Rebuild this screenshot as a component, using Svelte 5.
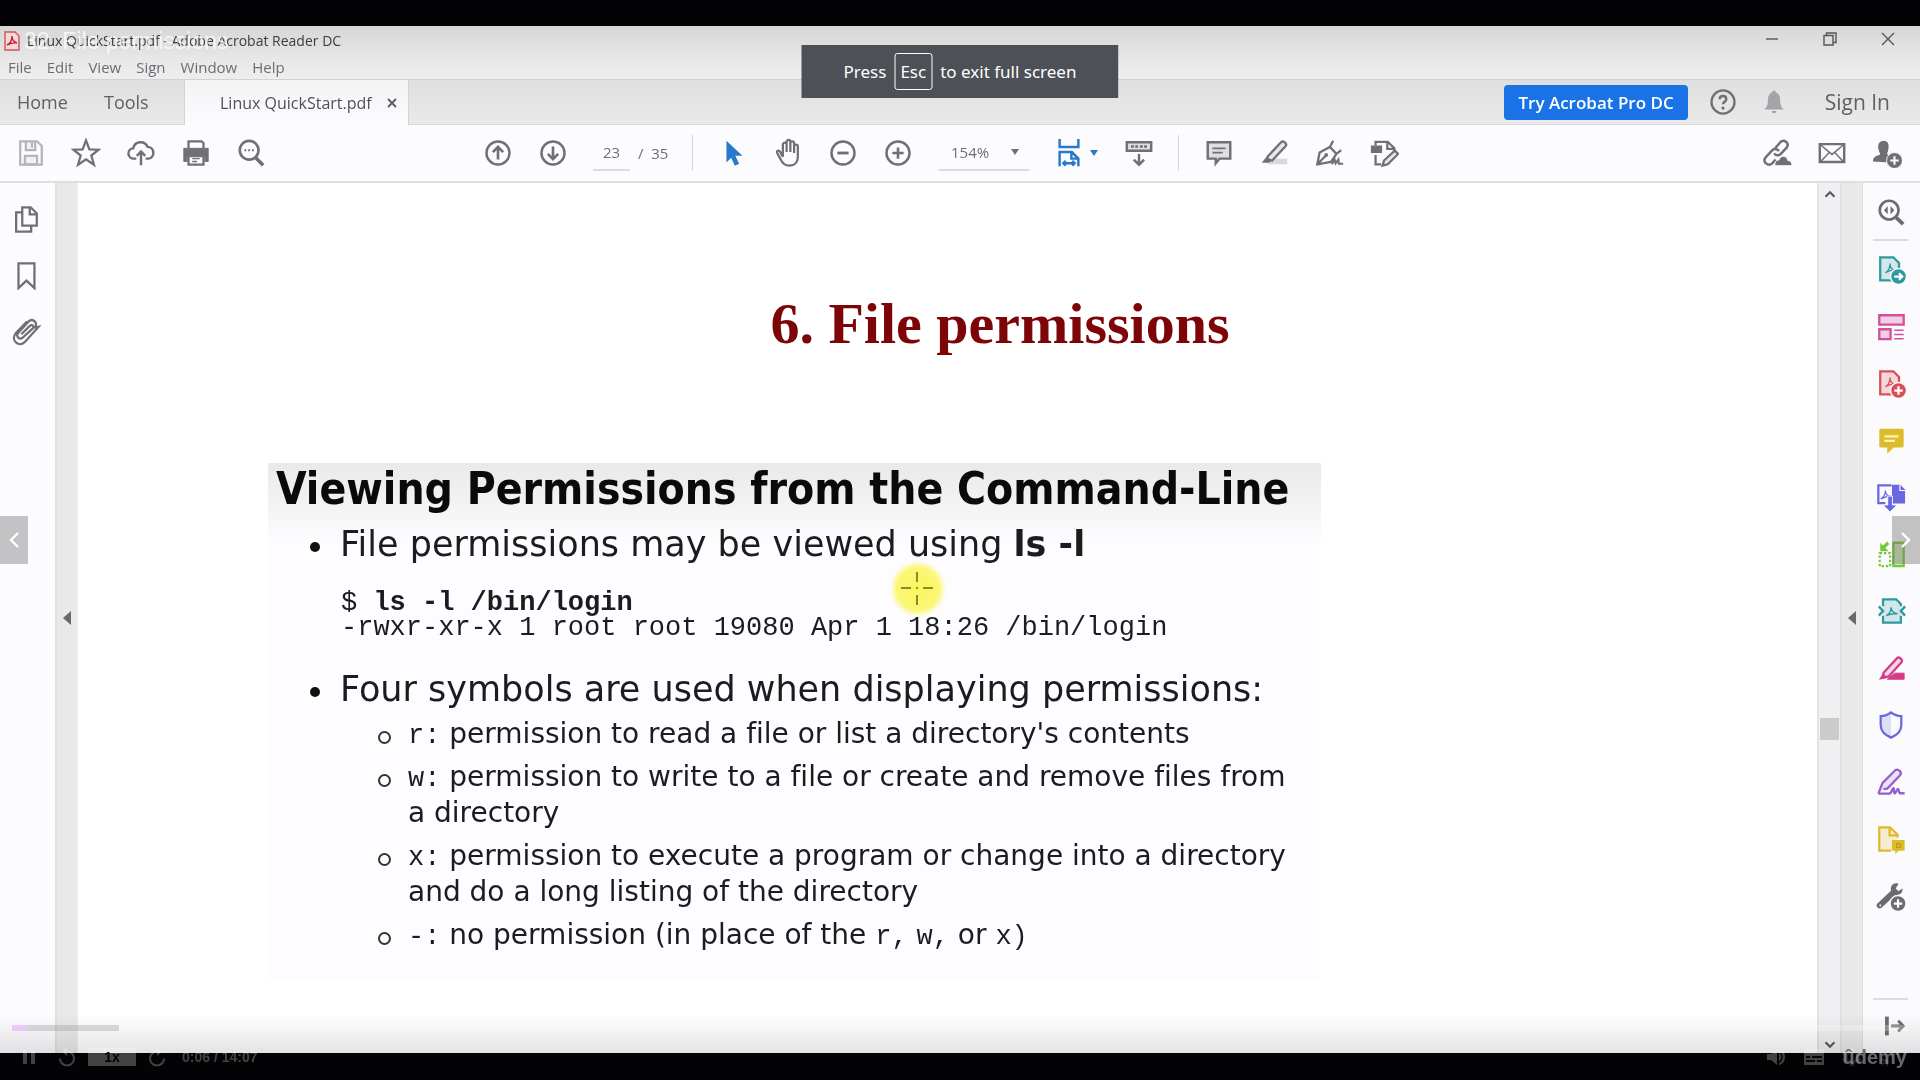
<script>
  let page = $state('23');
  let zoom = $state('154%');

  const menus = ['File', 'Edit', 'View', 'Sign', 'Window', 'Help'];

  const pdfMark = '<path d="M10 20c3-2 5-6 5-10 0 4 2 7 6 7-4 0-8 1-11 3z" stroke-width="1.4"/>';

  // Icon bodies on a 32 by 32 grid, drawn with the current colour.
  const icons = {
    save: '<g opacity=".5"><path d="M4.500 3.500h18l5 5v20h-23z" fill="none"/><path d="M10.500 4v9h10V4M17 4v6M9.500 28v-9h13v9z" fill="currentColor" fill-opacity=".15"/></g>',
    star: '<path d="M16 2.500l3.600 9.700 9.900.3-7.800 6.200 2.800 9.800-8.500-5.800-8.500 5.800 2.800-9.800-7.800-6.200 9.900-.3z"/>',
    cloud: '<path d="M11 22H8.500a5.500 5.500 0 0 1-.8-11A8 8 0 0 1 23 9.500a6.300 6.300 0 0 1 1 12.500h-3M16 29V14.500M11.500 19l4.500-4.700 4.500 4.700" stroke-width="2.600"/>',
    print: '<path d="M8 11V3.500h14l2 2V11" /><path d="M3 11h26v14h-3.500v-5h-19v5H3z" fill="currentColor" stroke-width="1"/><path d="M8 19h16v9.500H8z"/><path d="M12 22h8M12 25h5" stroke-width="1.500"/>',
    find: '<circle cx="14" cy="13" r="10" stroke-width="2.800"/><path d="M21 21l8 8" stroke-width="3.800"/><path d="M9 13h2m2 0h2m2 0h2" stroke-width="2"/>',
    up: '<circle cx="16" cy="16" r="12.300" stroke-width="2.600"/><path d="M16 23V10M10.500 15L16 9.500l5.500 5.500" stroke-width="2.800"/>',
    down: '<circle cx="16" cy="16" r="12.300" stroke-width="2.600"/><path d="M16 9v13M10.500 17l5.500 5.500 5.500-5.500" stroke-width="2.800"/>',
    arrow: '<path d="M9 3v23l5-5 4 8.500 4.500-2-4-8.500H26z" fill="currentColor" stroke="none"/>',
    hand: '<path d="M10.500 20V7a2 2 0 0 1 4 0v8V4a2 2 0 0 1 4 0v11V5.500a2 2 0 0 1 4 0V16 9a2 2 0 0 1 4 0v11c0 6-3.500 9.500-9 9.500-5 0-7.500-2.500-9.500-7L4.500 16c-1-2.500 1.500-3.500 3-1.500z"/>',
    minus: '<circle cx="16" cy="16" r="12.300" stroke-width="2.600"/><path d="M10 16h12" stroke-width="3"/>',
    plus: '<circle cx="16" cy="16" r="12.300" stroke-width="2.600"/><path d="M10 16h12M16 10v12" stroke-width="2.800"/>',
    fit: '<path d="M6 1v8.500h20V1M6 30V15h13l7 7v8M18.500 15v7H26M10 27h12M12.500 24.500L10 27l2.500 2.500M19.500 24.500L22 27l-2.500 2.500" stroke-width="2.600"/>',
    scroll: '<path d="M3 4.500h26v9H3z" fill="currentColor" fill-opacity=".2" stroke-width="2.600"/><path d="M7.500 9h3m1.500 0h3m2 0h3m1.500 0h3M16 17v11M10.500 23l5.500 5.500 5.500-5.500" stroke-width="2.600"/>',
    comment: '<path d="M4 4.500h24v17.500H16.500L12.500 27v-5H4z" fill="currentColor" fill-opacity=".2" stroke-width="2.600"/><path d="M9 11h14M9 15.500h11" stroke-width="1.800"/>',
    marker: '<path d="M14 22h16v6H9z" fill="currentColor" fill-opacity=".25" stroke="none"/><path d="M9 20L23.500 4.500c2-2 7 1 5 4L14 24l-6-1z" fill="currentColor" fill-opacity=".15"/><path d="M9 20l5 4-3.500 2.500H3l3-4z" fill="currentColor" stroke="none"/>',
    pen: '<path d="M3.500 28L6 15.500l11-6 7 7.500-6 8.500zM3.500 28l9-9M17 9.500L20.500 3M24 17l5-4"/><circle cx="13" cy="18" r="2" fill="currentColor" stroke="none"/><path d="M19 28l3-5 1 4 3-4 .5 4.500H31" stroke-width="2.200"/>',
    edit: '<path d="M7 8V4h13l7 7v3M19.500 4v7.500H26M7 18v10h6" /><path d="M2 8h12v8H2z" fill="currentColor" stroke="none"/><path d="M14.500 29.500l1.500-5.500 11.500-10.500 3.500 3.500-11 11z" fill="currentColor" fill-opacity=".15"/>',
    link: '<path d="M14 11l5.500-6.500c4-4 10 1 7 5.500L20 17c-2 2-5.500 2-7-.5M18 14c-2-3.500-6-2.500-7.500-.5L4 20.500c-4 5 2.500 10.500 7 6.500l3.500-4" stroke-width="2.600"/><path d="M14 29.500c-1-4.500 1.500-6 4-6 2-6 9-4.500 9.500.5 3.500 0 5 3.500 4 5.500z" fill="currentColor" stroke="#fcfbfe" stroke-width="1"/>',
    mail: '<path d="M3 6.500h26v19H3z" stroke-width="2.600"/><path d="M4 7.500l12 10 12-10M4 25l9-9.500M28 25l-9-9.500" stroke-width="1.600"/>',
    person: '<path d="M1 25c0-5 3-6 7-7 1-1 .5-2-.5-4C5 7 8 3 12.500 3S19 7 17 14c-1 2-1 3 0 4l6 3-5 5z" fill="currentColor" stroke="none"/><circle cx="24" cy="24" r="8.500" fill="currentColor" stroke="#fcfbfe" stroke-width="1"/><path d="M19.500 24h9M24 19.500v9" stroke="#fcfbfe" stroke-width="2.200"/>',
    help: '<circle cx="16" cy="16" r="12.300"/><path d="M12.500 13c0-4.500 7-4.500 7 0 0 2.500-3.500 3-3.500 5.500" stroke-width="2.600"/><circle cx="16" cy="22.500" r="1.700" fill="currentColor" stroke="none"/>',
    bell: '<path d="M5.500 24c3.500-3 4-6 4-11 0-4 2-6.500 4.500-7.200a2 2 0 0 1 4 0c2.500.7 4.500 3.200 4.500 7.200 0 5 .5 8 4 11zM13.500 25.500h5a2.500 2.500 0 0 1-5 0z" fill="currentColor" stroke="none"/>',
    pages: '<path d="M12 3.500h9l6.500 6.500v13H12zM20 4v7h7M12 9H5.500v20.500h16V23" />',
    bookmark: '<path d="M8 3.500h17V30l-8.500-8L8 30z"/>',
    clip: '<path d="M11 19.500l9-9c3-2.500 5 1 3 3L12.500 23c-3.500 3-8-1.500-4.500-5.500L18.500 6c5-4.500 11 1.500 6.500 7M25.500 12.500l4-1-14.500 16c-6 6.500-16-1-10-9L17 6"/>',
    look: '<circle cx="14" cy="14" r="10" stroke-width="2.800"/><path d="M21.500 22l7.500 7" stroke-width="4"/><path d="M12.500 9.500v9L8.500 14zM15.500 9.500v9l4-4.500z" fill="currentColor" stroke="none"/>',
    exportPdf: `<path d="M4.500 3.500h14l6 6v18.500h-20z" fill="currentColor" fill-opacity=".2"/>${pdfMark}<circle cx="24" cy="24" r="8.500" fill="currentColor" stroke="#fafafc" stroke-width="1.500"/><path d="M19.500 24h8M24.500 20.500L28 24l-3.500 3.500" stroke="#fff"/>`,
    organize: '<path d="M3.500 4.500h26v10h-26zM3.500 19.500h12v10.500h-12z" fill="currentColor" fill-opacity=".25" stroke-width="2.500"/><path d="M19.500 20.500h10M19.500 25h10M19.500 29.500h10" stroke-width="1.600"/>',
    createPdf: `<path d="M4.500 3.500h14l6 6v18.500h-20z" fill="currentColor" fill-opacity=".2"/>${pdfMark}<circle cx="24" cy="24" r="8.500" fill="currentColor" stroke="#fafafc" stroke-width="1.500"/><path d="M19.500 24h9M24 19.500v9" stroke="#fff"/>`,
    note: '<path d="M5 4h23a1.500 1.500 0 0 1 1.500 1.500v17A1.500 1.500 0 0 1 28 24h-9l-7 6.500V24H5a1.500 1.500 0 0 1-1.500-1.500v-17A1.500 1.500 0 0 1 5 4z" fill="currentColor" stroke="none"/><path d="M9 12h15M9 17h11" stroke="#fff3b0"/>',
    combine: '<path d="M17 3h9l5 5v15H17z" fill="currentColor" stroke="none"/><path d="M25.500 3v6H31" stroke="#fff" stroke-width="1.200"/><path d="M10 22.500H2.500v-19h14" /><path d="M5 18c4-2 5-5 5-9 0 4 2 6 6 6-4 0-7 1-11 3z" stroke-width="1.300"/><path d="M12.500 15h5v9.500h5L15 32l-7.500-7.500h5z" fill="currentColor" stroke="#fafafc" stroke-width="1"/>',
    compare: '<path d="M18.500 4h11v25h-11z" fill="currentColor" fill-opacity=".35" stroke-width="2.500"/><path d="M4 15h11v14H4z" stroke-dasharray="2.500 2"/><path d="M13 4L7 10" stroke-width="3.500"/><path d="M4.500 4v9h9z" fill="currentColor" stroke="none"/>',
    compress: '<path d="M7.500 11V3.500h14l5 5V11M7.500 21v7.500h19V21" /><path d="M7.500 3.500h14l5 5v20h-19z" fill="currentColor" fill-opacity=".2" stroke="none"/><path d="M3 11l4.500 5L3 21M31 11l-4.500 5L31 21" stroke-width="2.600"/><path d="M11 21c4-2 5-5 5-9 0 4 3 6 7 7-5-.5-9 .5-12 2z" stroke-width="1.500"/>',
    redact: '<path d="M20 21.500h10V28H12z" fill="currentColor" stroke="currentColor" stroke-width="1"/><path d="M8 21L22.500 5.500c2-2 6 1 5 4L13.500 25l-6 1z" fill="currentColor" fill-opacity=".2" stroke-width="2.400"/><path d="M8 21l3 6-8 1.500z" fill="currentColor" stroke="none"/>',
    shield: '<path d="M16 2.500c3 2.500 7 4 11 4V16c0 6-4 10.500-11 13.500C9 26.500 5 22 5 16V6.500c4 0 8-1.500 11-4z"/><path d="M16 4v24C9.500 25 6 21.500 6 16V7.500c4 0 7-1 10-3.500z" fill="currentColor" fill-opacity=".2" stroke="none"/>',
    sign: '<path d="M2.500 28.500L7 17 20.500 3.500c3-2 8 2 5 5.500L12 23l-4 .500M2.500 28.500H15" fill="currentColor" fill-opacity=".15" stroke-width="2.400"/><path d="M14 28.500c3 0 3-6 4.500-6s0 5.500 1.500 5.500 2-4.500 3.500-4.500 0 4 2 4.500h5" stroke-width="2.500"/>',
    send: '<path d="M16 28.500H3.500v-25H15l8 8v3M14.500 3.500v8.500H23" /><path d="M3.500 3.500H15l8 8v17H3.500z" fill="currentColor" fill-opacity=".2" stroke="none"/><path d="M17 17h13.500v11.500H24L20.500 32v-3.500H17z" fill="currentColor" stroke="none"/><path d="M22 21h4v4h-4z" stroke="#b79a10" stroke-width="1.200"/>',
    tools: '<path d="M4 26L18.500 12.500" stroke-width="6.500" stroke-linecap="round"/><path d="M24 3c-5-2-9 2-8 7l5 5c5 0 8-3 7-7l-4 3-3-3z" fill="currentColor" stroke="none"/><circle cx="4.500" cy="26" r="1" fill="#fff" stroke="none"/><circle cx="23.500" cy="24" r="8.500" fill="currentColor" stroke="#fafafc" stroke-width="1.500"/><path d="M19 24h9M23.500 19.500v9" stroke="#fff"/>',
    collapse: '<path d="M9.500 6v20" stroke-width="4"/><path d="M14 16h13M21.500 10.500L27 16l-5.500 5.500" stroke-width="3"/>'
  };

  const rightTools = [
    ['exportPdf', 'Export PDF', 'teal'],
    ['organize', 'Organize pages', 'pink'],
    ['createPdf', 'Create PDF', 'red'],
    ['note', 'Comment', 'yellow'],
    ['combine', 'Combine files', 'indigo'],
    ['compare', 'Compare files', 'green'],
    ['compress', 'Compress PDF', 'teal'],
    ['redact', 'Redact', 'magenta'],
    ['shield', 'Protect', 'indigo'],
    ['sign', 'Fill and sign', 'purple'],
    ['send', 'Send for comments', 'yellow'],
    ['tools', 'More tools', 'grey']
  ];
</script>

{#snippet icon(name)}
  <svg class="icon" viewBox="0 0 32 32" fill="none" stroke="currentColor" stroke-width="2.4" aria-hidden="true">{@html icons[name]}</svg>
{/snippet}

{#snippet tool(name, label, tone = '')}
  <button class="tool {tone}" aria-label={label}>{@render icon(name)}</button>
{/snippet}

<div class="screen">
  <div class="window">
    <header class="titlebar">
      <svg class="app-icon" viewBox="0 0 16 20" fill="none" stroke="#d0525a" stroke-width="1.400" aria-hidden="true">
        <path d="M1 1h10l4 4v14H1z" fill="#f3d9da" />
        <path d="M3 14c4-2 5-5 5-9 0 4 2 6 5 7-4-.500-7 .500-10 2z" stroke="#c8232c" />
      </svg>
      <span class="app-title">Linux QuickStart.pdf - Adobe Acrobat Reader DC</span>
      <div class="controls">
        <button aria-label="Minimize"><svg viewBox="0 0 14 14"><path d="M1 7h12" /></svg></button>
        <button aria-label="Restore"><svg viewBox="0 0 14 14"><path d="M1 3.500h9V13H1zM3.500 3V1H13v9.500h-2.500" /></svg></button>
        <button aria-label="Close"><svg viewBox="0 0 14 14"><path d="M1 1l12 12M13 1L1 13" /></svg></button>
      </div>
    </header>

    <nav class="menubar" aria-label="Menu">
      {#each menus as m}<button>{m}</button>{/each}
    </nav>

    <div class="tabs">
      <button class="tab home">Home</button>
      <button class="tab tools">Tools</button>
      <div class="tab file">
        <button>Linux QuickStart.pdf</button>
        <button class="close" aria-label="Close tab"><svg viewBox="0 0 10 10"><path d="M1 1l8 8M9 1L1 9" /></svg></button>
      </div>
      <div class="account">
        <button class="try">Try Acrobat Pro DC</button>
        <button class="tool help" aria-label="Help">{@render icon('help')}</button>
        <button class="tool bell" aria-label="Notifications">{@render icon('bell')}</button>
        <button class="signin">Sign In</button>
      </div>
    </div>

    <div class="toolbar">
      <div class="group">
        {@render tool('save', 'Save')}
        {@render tool('star', 'Star')}
        {@render tool('cloud', 'Upload')}
        {@render tool('print', 'Print')}
        {@render tool('find', 'Find')}
      </div>
      <div class="group middle">
        {@render tool('up', 'Previous page')}
        {@render tool('down', 'Next page')}
        <input class="page" aria-label="Page" bind:value={page} />
        <span class="total">/&nbsp; 35</span>
        <span class="rule"></span>
        {@render tool('arrow', 'Select', 'blue')}
        {@render tool('hand', 'Pan')}
        {@render tool('minus', 'Zoom out')}
        {@render tool('plus', 'Zoom in')}
        <div class="zoom">
          <select aria-label="Zoom" bind:value={zoom}>
            <option>100%</option>
            <option>154%</option>
          </select>
          <svg class="caret" viewBox="0 0 8 6"><path d="M0 0h8L4 6z" /></svg>
        </div>
        <button class="tool fit blue" aria-label="Page fit">
          {@render icon('fit')}
          <svg class="caret" viewBox="0 0 8 6"><path d="M0 0h8L4 6z" /></svg>
        </button>
        {@render tool('scroll', 'Scrolling')}
        <span class="rule"></span>
        {@render tool('comment', 'Add comment')}
        {@render tool('marker', 'Highlight')}
        {@render tool('pen', 'Sign document')}
        {@render tool('edit', 'Stamp')}
      </div>
      <div class="group right">
        {@render tool('link', 'Share link')}
        {@render tool('mail', 'Send by email')}
        {@render tool('person', 'Share with others')}
      </div>
    </div>

    <div class="body">
      <aside class="left">
        {@render tool('pages', 'Page thumbnails')}
        {@render tool('bookmark', 'Bookmarks')}
        {@render tool('clip', 'Attachments')}
      </aside>
      <div class="strip first">
        <button aria-label="Show left panel"><svg viewBox="0 0 8 14"><path d="M8 0v14L0 7z" /></svg></button>
      </div>

      <main>
        <h1>6. File permissions</h1>
        <section class="slide">
          <h2>Viewing Permissions from the Command-Line</h2>
          <ul class="points">
            <li><div>File permissions may be viewed using <b>ls -l</b></div></li>
          </ul>
          <pre>$ <b>ls -l /bin/login</b>
-rwxr-xr-x 1 root root 19080 Apr 1 18:26 /bin/login</pre>
          <ul class="points">
            <li><div>Four symbols are used when displaying permissions:</div></li>
          </ul>
          <ul class="symbols">
            <li><div><code>r:</code> permission to read a file or list a directory's contents</div></li>
            <li><div><code>w:</code> permission to write to a file or create and remove files from<br />a directory</div></li>
            <li><div><code>x:</code> permission to execute a program or change into a directory<br />and do a long listing of the directory</div></li>
            <li><div><code>-:</code> no permission (in place of the <code>r,</code> <code>w,</code> or <code>x)</code></div></li>
          </ul>
          <svg class="pointer" viewBox="0 0 60 60" aria-hidden="true">
            <defs>
              <radialGradient id="glow">
                <stop offset="0" stop-color="#fdf95c" />
                <stop offset=".75" stop-color="#fdfa78" />
                <stop offset="1" stop-color="#fefcb8" stop-opacity="0" />
              </radialGradient>
            </defs>
            <circle cx="30" cy="30" r="29" fill="url(#glow)" />
            <path d="M29 13v10M29 36v10M13 29h10M35 29h10M28 29h2" stroke="#8d8a2c" stroke-width="2" />
          </svg>
        </section>
      </main>

      <div class="scrollbar">
        <svg viewBox="0 0 10 8"><path d="M1 6l4-4 4 4" /></svg>
        <span class="thumb"></span>
        <svg viewBox="0 0 10 8"><path d="M1 2l4 4 4-4" /></svg>
      </div>
      <div class="strip">
        <button aria-label="Hide right panel"><svg viewBox="0 0 8 14"><path d="M8 0v14L0 7z" /></svg></button>
      </div>
      <aside class="side">
        {@render tool('look', 'Find a tool')}
        <hr />
        {#each rightTools as [name, label, tone]}
          {@render tool(name, label, tone)}
        {/each}
        <div class="foot">
          <hr />
          {@render tool('collapse', 'Collapse panel')}
        </div>
      </aside>
    </div>
  </div>

  <div class="video-title">32. File permissions</div>
  <div class="toast">Press <kbd>Esc</kbd> to exit full screen</div>
  <button class="nav prev" aria-label="Previous lecture"><svg viewBox="0 0 10 16"><path d="M9 1L2 8l7 7" /></svg></button>
  <button class="nav next" aria-label="Next lecture"><svg viewBox="0 0 10 16"><path d="M1 1l7 7-7 7" /></svg></button>

  <div class="brand">ûdemy</div>
  <footer class="player">
    <div class="progress"><span class="buffered"></span><span class="played"></span></div>
    <div class="buttons">
      <button class="ctl pause" aria-label="Pause"><svg viewBox="0 0 20 20"><path d="M4 3h4v14H4zM12 3h4v14h-4z" /></svg></button>
      <button class="ctl" aria-label="Rewind"><svg viewBox="0 0 20 20"><path d="M10 0v3.500a8 8 0 1 1-8 8h2a6 6 0 1 0 6-6V9L5 4.500z" /></svg></button>
      <button class="rate">1x</button>
      <button class="ctl" aria-label="Forward"><svg viewBox="0 0 20 20"><path d="M10 0v3.500a8 8 0 1 0 8 8h-2a6 6 0 1 1-6-6V9l5-4.500z" /></svg></button>
      <span class="time">0:06 / 14:07</span>
      <div class="end">
        <button class="ctl" aria-label="Volume"><svg viewBox="0 0 20 20"><path d="M1 7h4l6-5v16l-6-5H1zM13 6c3 1.500 3 6.500 0 8zM13 2c8 2 8 14 0 16v-2c5-2 5-10 0-12z" /></svg></button>
        <button class="ctl" aria-label="Captions"><svg viewBox="0 0 20 20"><path fill-rule="evenodd" d="M1 2h18a1 1 0 0 1 1 1v14a1 1 0 0 1-1 1H1a1 1 0 0 1-1-1V3a1 1 0 0 1 1-1zM2 9v2h4V9zM8 9v2h10V9zM2 13v2h9v-2zM13 13v2h5v-2z" /></svg></button>
        <button class="ctl faint" aria-label="Settings"><svg viewBox="0 0 20 20"><path fill-rule="evenodd" d="M8 1h4l.500 3 2.500 1 3-1 2 3.500L17.500 10l2 2.500-2 3.500-3-1-2 1-.500 3H8l-.500-3-2.500-1-3 1-2-3.500L2.500 10 0 7.500 2 4l3 1 2.500-1zM10 6a4 4 0 1 0 0 8 4 4 0 0 0 0-8z" /></svg></button>
        <button class="ctl faint" aria-label="Exit full screen"><svg viewBox="0 0 20 20"><path d="M12 8V1h2v3.500L18 1l1 1-4 4h4v2zM8 12v7H6v-3.500L2 19l-1-1 4-4H1v-2z" /></svg></button>
      </div>
    </div>
  </footer>
</div>

<style>
  :global(body) {
    margin: 0;
    background: #030306;
  }
  * {
    box-sizing: border-box;
  }
  button,
  input,
  select {
    font: inherit;
    color: inherit;
    background: none;
    border: 0;
    padding: 0;
    margin: 0;
  }
  h1,
  h2,
  ul,
  pre {
    margin: 0;
    padding: 0;
  }
  .screen {
    position: relative;
    display: flex;
    flex-direction: column;
    min-height: 100vh;
    padding: 26px 0 27px;
    background: #030306;
    font-family: "Open Sans", "Noto Sans", sans-serif;
    color: #606066;
    overflow: hidden;
  }
  .window {
    flex: 1;
    display: flex;
    flex-direction: column;
    background: #fcfbfe;
  }

  .titlebar {
    display: flex;
    align-items: center;
    height: 29px;
    padding: 0 3px 0 4px;
    background: linear-gradient(#d6d6d6, #e4e5e5);
    font-size: 14px;
    color: #3c3c42;
  }
  .app-icon {
    width: 16px;
    height: 20px;
    margin-right: 7px;
  }
  .controls {
    display: flex;
    margin-left: auto;
  }
  .controls button {
    width: 58px;
    height: 28px;
  }
  .controls svg {
    width: 14px;
    height: 14px;
    fill: none;
    stroke: #55555a;
    stroke-width: 1.4;
  }
  .menubar {
    display: flex;
    align-items: center;
    gap: 15px;
    height: 25px;
    padding: 0 8px;
    background: linear-gradient(#e6e6e6, #eeeeef);
    border-bottom: 1px solid #d2d2d4;
    font-size: 15px;
    line-height: 20px;
    color: #6c6c74;
  }

  .tabs {
    display: flex;
    height: 45px;
    background: linear-gradient(#dfdfdf, #eaeaea);
    font-size: 18px;
  }
  .tab {
    line-height: 44px;
    border-bottom: 1px solid #d9d9da;
  }
  .home {
    width: 88px;
    padding-left: 17px;
    text-align: left;
  }
  .tools {
    width: 96px;
    padding-left: 16px;
    text-align: left;
  }
  .file {
    display: flex;
    align-items: center;
    justify-content: space-between;
    width: 225px;
    padding: 0 11px 0 35px;
    background: linear-gradient(#f3f3f4, #fcfbfe);
    border-left: 1px solid #d4d4d6;
    border-right: 1px solid #d4d4d6;
    border-bottom: 0;
    font-size: 16px;
    color: #505058;
  }
  .close svg {
    display: block;
    width: 10px;
    height: 10px;
    stroke: #5a5a60;
    stroke-width: 1.8;
  }
  .account {
    flex: 1;
    display: flex;
    align-items: center;
    justify-content: flex-end;
    padding-right: 30px;
    border-bottom: 1px solid #d9d9da;
  }
  .try {
    height: 35px;
    padding: 0 14px;
    margin-right: 10px;
    border-radius: 4px;
    background: #1a73e6;
    color: #fff;
    font-size: 17px;
    font-weight: 600;
  }
  .account .tool {
    width: 51px;
    height: 44px;
  }
  .help {
    color: #707074;
  }
  .bell {
    color: #a4a4a8;
  }
  .signin {
    margin-left: 25px;
    font-size: 21px;
  }

  .toolbar {
    display: flex;
    align-items: center;
    height: 58px;
    padding: 0 6px 0 3px;
    border-bottom: 2px solid #dfdfe2;
    font-size: 15px;
    color: #707074;
  }
  .group {
    display: flex;
    align-items: center;
  }
  .middle {
    margin-left: 192px;
  }
  .right {
    margin-left: auto;
  }
  .tool {
    display: flex;
    flex: none;
    align-items: center;
    justify-content: center;
    width: 55px;
    height: 56px;
  }
  .icon {
    width: 30px;
    height: 30px;
  }
  .page {
    width: 37px;
    height: 36px;
    margin-left: 13px;
    border-bottom: 2px solid #dcdcde;
    text-align: center;
  }
  .total {
    width: 38px;
    padding-left: 8px;
    white-space: nowrap;
  }
  .rule {
    width: 1px;
    height: 36px;
    margin: 0 12px;
    background: #d6d6d9;
  }
  .total + .rule {
    margin-left: 24px;
  }
  .zoom {
    display: flex;
    align-items: center;
    width: 90px;
    height: 36px;
    margin-left: 14px;
    padding: 0 10px 0 12px;
    border-bottom: 2px solid #dcdcde;
  }
  .zoom select {
    flex: 1;
    appearance: none;
  }
  .caret {
    width: 8px;
    height: 6px;
    fill: currentColor;
    stroke: none;
  }
  .fit {
    gap: 6px;
    width: 65px;
    margin: 0 3px 0 14px;
  }

  .body {
    flex: 1;
    display: flex;
  }
  .left {
    width: 55px;
    padding-top: 8px;
    color: #707074;
  }
  .left .tool {
    width: 52px;
  }
  .strip {
    display: flex;
    align-items: center;
    justify-content: center;
    width: 23px;
    background: #e9e9e9;
    border-left: 2px solid #e0e0e1;
    border-right: 1px solid #dededf;
  }
  .first {
    border-right-color: #efefef;
  }
  .strip svg {
    display: block;
    width: 8px;
    height: 14px;
    fill: #68686c;
  }
  main {
    flex: 1;
    min-width: 0;
    padding: 108px 85px 0 190px;
    background: #fff;
  }
  h1 {
    margin-bottom: 106px;
    font: bold 58px/66px "Liberation Serif", serif;
    text-align: center;
    color: #7d0508;
  }
  .slide {
    position: relative;
    max-width: 1053px;
    padding-bottom: 28px;
    background: linear-gradient(#e9e9e9, #fdfcfe 80px);
    font-family: "DejaVu Sans", sans-serif;
    font-variant-ligatures: none;
    color: #1c1c1e;
  }
  h2 {
    padding-left: 8px;
    margin-bottom: 7px;
    font: bold 44px/52px "DejaVu Sans Condensed", "DejaVu Sans", sans-serif;
    white-space: nowrap;
    color: #0a0a0a;
  }
  ul {
    list-style: none;
  }
  li {
    display: flex;
    white-space: nowrap;
  }
  li::before {
    content: "";
    flex: none;
    border-radius: 50%;
  }
  .points {
    padding-left: 42px;
    font-size: 35px;
    line-height: 44px;
  }
  .points li::before {
    width: 10px;
    height: 10px;
    margin: 20px 20px 0 0;
    background: #111;
  }
  pre {
    margin: 25px 0 26px 73px;
    font: 27px/25px "Liberation Mono", monospace;
  }
  .symbols {
    display: flex;
    flex-direction: column;
    gap: 7px;
    padding: 5px 0 0 110px;
    font-size: 28px;
    line-height: 36px;
  }
  .symbols li::before {
    width: 9px;
    height: 9px;
    margin: 15px 17px 0 0;
    border: 2px solid #333;
  }
  code {
    font: 27px/20px "Liberation Mono", monospace;
  }
  .pointer {
    position: absolute;
    left: 620px;
    top: 96px;
    width: 60px;
    height: 60px;
    mix-blend-mode: multiply;
  }

  .scrollbar {
    display: grid;
    grid-template-rows: auto 1fr auto;
    justify-items: center;
    width: 23px;
    padding: 7px 0 4px;
    background: #f0eff1;
    border-left: 2px solid #e3e3e5;
  }
  .scrollbar svg {
    width: 12px;
    height: 9px;
    fill: none;
    stroke: #5c5c60;
    stroke-width: 2;
  }
  .thumb {
    width: 19px;
    height: 22px;
    margin-top: 519px;
    background: #cbcbcc;
  }
  .side {
    display: flex;
    flex-direction: column;
    align-items: center;
    width: 57px;
    padding-right: 2px;
    background: #fbfafc;
    color: #6c6c70;
  }
  .side .tool {
    height: 57px;
  }
  hr {
    width: 35px;
    height: 2px;
    margin: -1px 0;
    border: 0;
    background: #dcdcde;
  }
  .foot {
    display: flex;
    flex-direction: column;
    align-items: center;
    margin-top: auto;
  }
  .side .foot .tool {
    height: 54px;
    padding-left: 4px;
  }
  .teal { color: #2f9a9e; }
  .pink { color: #d2509c; }
  .red { color: #d94f59; }
  .yellow { color: #dcbb2c; }
  .indigo { color: #6a68e0; }
  .green { color: #78c83c; }
  .magenta { color: #d23c88; }
  .purple { color: #9360cc; }
  .blue { color: #2a78c8; }

  .video-title {
    position: absolute;
    left: 24px;
    top: 27px;
    font: 23px/28px "Liberation Sans", sans-serif;
    color: rgba(255, 255, 255, 0.7);
  }
  .toast {
    position: absolute;
    top: 45px;
    left: 50%;
    transform: translateX(-50%);
    display: flex;
    align-items: center;
    justify-content: center;
    gap: 8px;
    width: 317px;
    height: 53px;
    background: #4d5056;
    color: #fff;
    font-family: "Noto Sans", sans-serif;
    font-size: 17px;
    white-space: nowrap;
  }
  kbd {
    padding: 0 5px;
    border: 1px solid #fff;
    border-radius: 3px;
    font: inherit;
    line-height: 35px;
  }
  .nav {
    position: absolute;
    top: 516px;
    display: flex;
    align-items: center;
    justify-content: center;
    width: 28px;
    height: 48px;
    background: rgba(110, 110, 110, 0.4);
  }
  .nav svg {
    width: 10px;
    height: 16px;
    fill: none;
    stroke: #fff;
    stroke-width: 2.4;
  }
  .prev {
    left: 0;
  }
  .next {
    right: 0;
  }

  .brand {
    position: absolute;
    right: 13px;
    bottom: 9px;
    font: bold 20px/28px "Liberation Sans", sans-serif;
    color: #77777a;
  }
  .player {
    position: absolute;
    left: 0;
    right: 0;
    bottom: 0;
    height: 66px;
    padding: 11px 12px 0;
    background: linear-gradient(rgba(0, 0, 0, 0), rgba(0, 0, 0, 0.18));
    color: rgba(255, 255, 255, 0.25);
    font-family: "Liberation Sans", sans-serif;
  }
  .progress {
    position: relative;
    height: 6px;
    background: rgba(255, 255, 255, 0.25);
  }
  .progress span {
    position: absolute;
    inset: 0 auto 0 0;
  }
  .buffered {
    width: 107px;
    background: rgba(0, 0, 0, 0.14);
  }
  .played {
    width: 16px;
    background: #e5c9f7;
  }
  .buttons {
    display: flex;
    align-items: center;
    height: 52px;
    padding: 0 8px 0 7px;
  }
  .ctl {
    width: 20px;
    height: 20px;
  }
  .ctl svg {
    display: block;
    width: 20px;
    height: 20px;
    fill: currentColor;
  }
  .faint {
    opacity: 0.5;
  }
  .pause {
    margin-right: 18px;
  }
  .rate {
    width: 48px;
    height: 18px;
    margin: 0 11px;
    background: rgba(255, 255, 255, 0.25);
    color: #000;
    font-size: 14px;
    font-weight: bold;
    line-height: 18px;
  }
  .time {
    margin-left: 15px;
    font-size: 14px;
    font-weight: bold;
  }
  .end {
    display: flex;
    gap: 18px;
    margin-left: auto;
  }
</style>
